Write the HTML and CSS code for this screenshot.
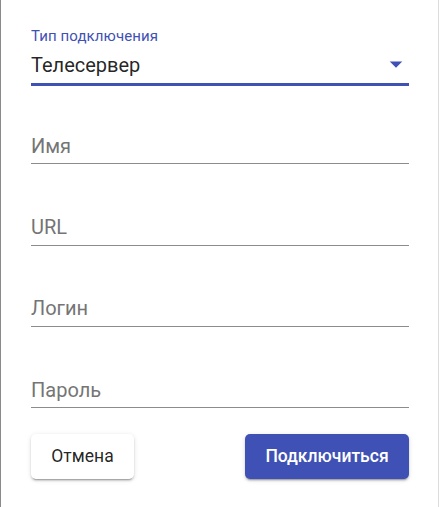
FILE: index.html
```html
<!DOCTYPE html>
<html lang="ru">
<head>
<meta charset="utf-8">
<title>Подключение</title>
<link rel="stylesheet" href="styles.css">
</head>
<body>
<div class="dialog">
  <form class="form">
    <div class="select-field">
      <label class="select-label">Тип подключения</label>
      <div class="select-row">
        <span class="select-value">Телесервер</span>
        <svg class="select-icon" viewBox="0 0 24 24" aria-hidden="true"><path d="M7 10l5 5 5-5z"/></svg>
      </div>
    </div>
    <div class="text-field first"><input class="text-input" type="text" placeholder="Имя"></div>
    <div class="text-field"><input class="text-input" type="text" placeholder="URL"></div>
    <div class="text-field"><input class="text-input" type="text" placeholder="Логин"></div>
    <div class="text-field"><input class="text-input" type="password" placeholder="Пароль"></div>
    <div class="actions">
      <button type="button" class="btn btn-default">Отмена</button>
      <button type="button" class="btn btn-primary">Подключиться</button>
    </div>
  </form>
</div>
</body>
</html>
```

FILE: styles.css
```css
* {
  box-sizing: border-box;
}

html, body {
  margin: 0;
  padding: 0;
  background: #ffffff;
}

body {
  font-family: Roboto, "Liberation Sans", Arial, sans-serif;
  color: rgba(0, 0, 0, 0.87);
}

.dialog {
  width: 439px;
  height: 507px;
  border-left: 1px solid #8a8a8a;
  border-right: 1px solid #dcdcdc;
  padding: 27.3px 29px 0 30px;
  background: #ffffff;
}

.form {
  display: flex;
  flex-direction: column;
}

.select-field {
  display: flex;
  flex-direction: column;
}

.select-label {
  font-size: 15px;
  line-height: 18px;
  color: #3f51b5;
  letter-spacing: 0.1px;
}

.select-row {
  margin-top: 7.9px;
  display: flex;
  align-items: flex-start;
  justify-content: space-between;
  padding-bottom: 5.8px;
  border-bottom: 3px solid #3f51b5;
}

.select-value {
  font-size: 20px;
  line-height: 24px;
  color: rgba(0, 0, 0, 0.87);
}

.select-icon {
  width: 30px;
  height: 30px;
  margin: -4.7px -2.25px -1.3px 0;
  fill: #3f51b5;
}

.text-field {
  margin-top: 50.65px;
  border-bottom: 1px solid #8c8c8c;
  padding-bottom: 5.6px;
}

.text-field.first {
  margin-top: 47.9px;
}

.text-input {
  display: block;
  width: 100%;
  border: 0;
  outline: 0;
  padding: 0;
  margin: 0;
  background: transparent;
  font-family: Roboto, "Liberation Sans", Arial, sans-serif;
  font-size: 20px;
  line-height: 24px;
  height: 24px;
  color: rgba(0, 0, 0, 0.87);
}

.text-input::placeholder {
  color: #757575;
  opacity: 1;
}

.actions {
  margin-top: 25.5px;
  display: flex;
  justify-content: space-between;
  align-items: center;
}

.btn {
  height: 45px;
  border: 0;
  border-radius: 5px;
  padding: 0 20px;
  font-family: Roboto, "Liberation Sans", Arial, sans-serif;
  font-size: 17.5px;
  font-weight: 400;
  letter-spacing: 0;
  cursor: pointer;
  box-shadow: 0 3px 1px -2px rgba(0, 0, 0, 0.2), 0 2px 2px 0 rgba(0, 0, 0, 0.14), 0 1px 5px 0 rgba(0, 0, 0, 0.12);
}

.btn-default {
  background: #ffffff;
  color: rgba(0, 0, 0, 0.87);
  width: 103px;
}

.btn-primary {
  background: #3f51b5;
  color: #ffffff;
  width: 164px;
  font-weight: 500;
}
```
